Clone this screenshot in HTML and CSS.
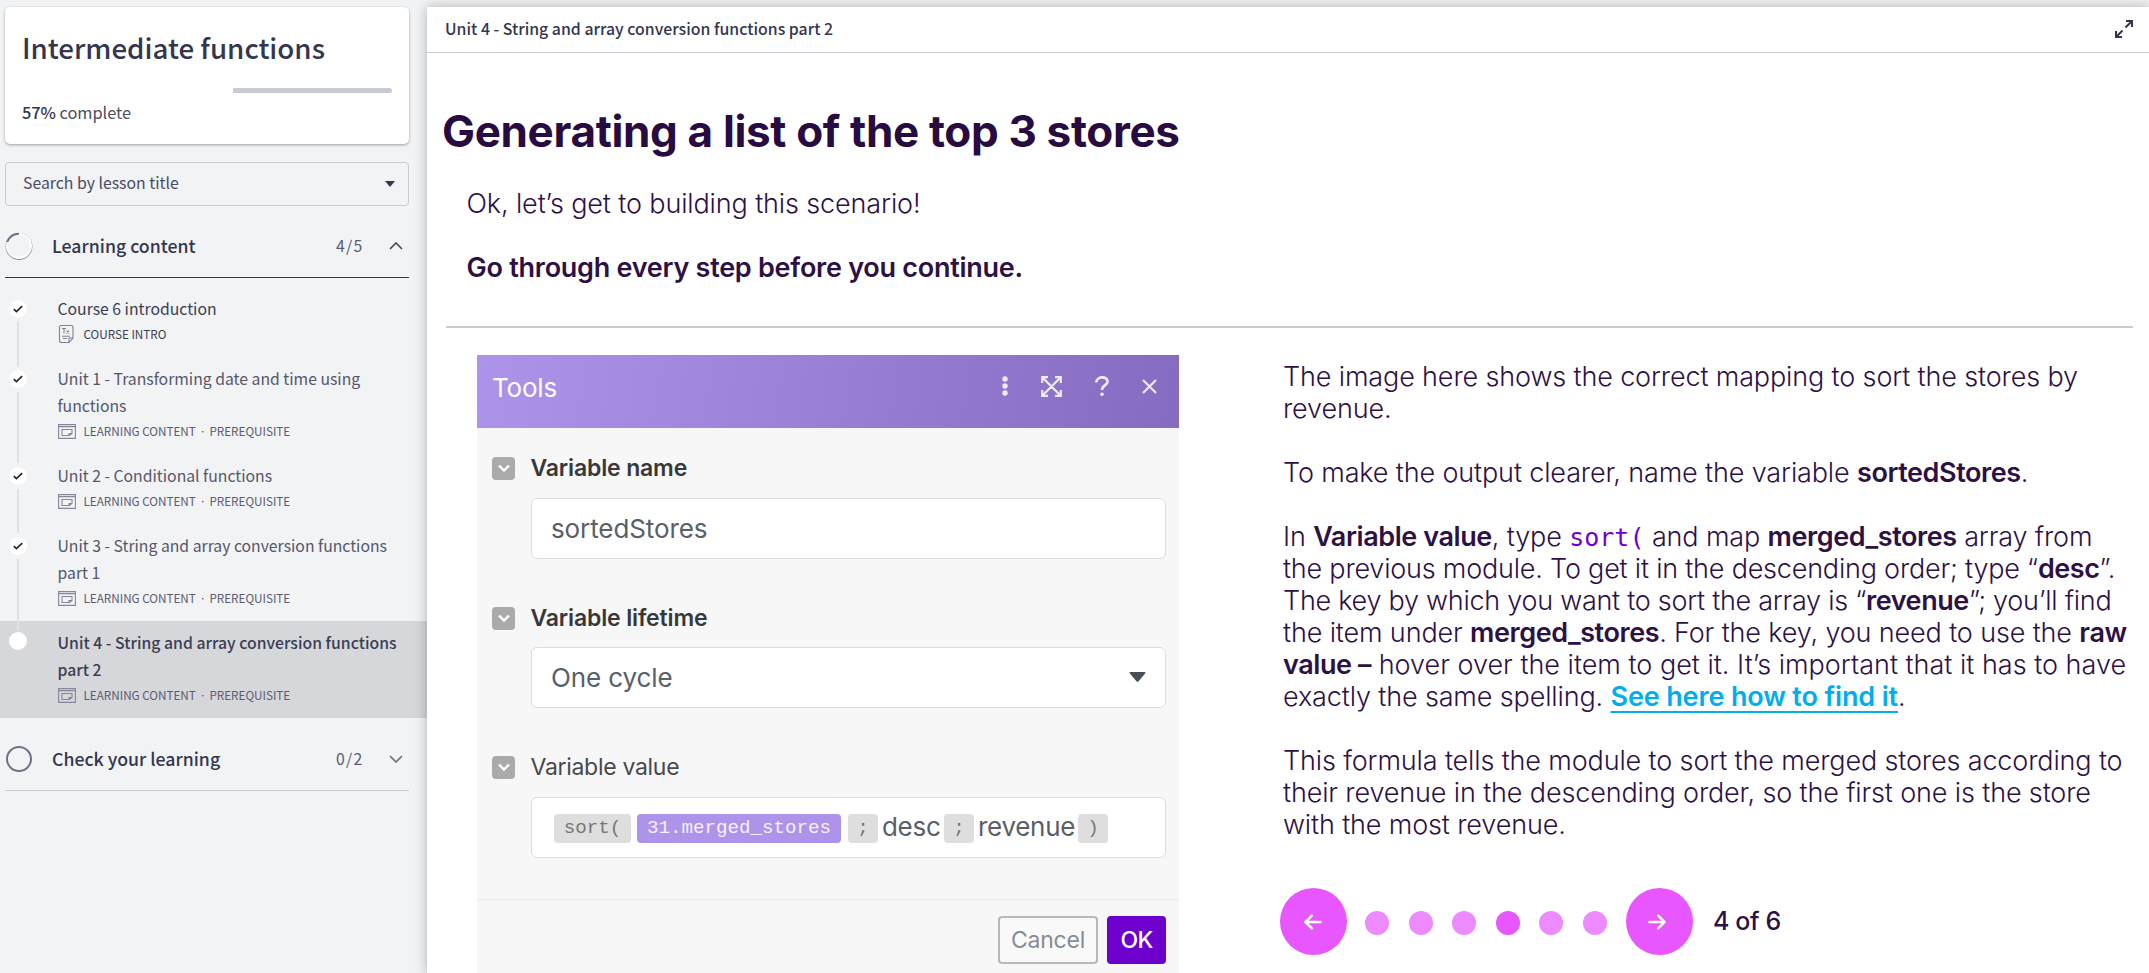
FILE: index.html
```html
<!DOCTYPE html>
<html lang="en">
<head>
<meta charset="utf-8">
<title>Intermediate functions</title>
<link rel="stylesheet" href="styles.css">
</head>
<body>
<div class="app">
  <aside class="sidebar">
    <section class="card">
      <h1 class="course-title">Intermediate functions</h1>
      <div class="progress"><div class="rest"></div></div>
      <p class="complete"><b>57%</b> complete</p>
    </section>
    <div class="search"><span>Search by lesson title</span>
      <svg width="10" height="6" viewBox="0 0 10 6"><path d="M0 0h10L5 6z" fill="#33364d"/></svg>
    </div>
    <div class="section open">
      <svg class="ring" width="28" height="28" viewBox="0 0 28 28"><circle cx="14" cy="14.500" r="12.700" fill="none" stroke="#8b8d9d" stroke-width="1.400"/><circle cx="14" cy="14" r="12" fill="none" stroke="#fff" stroke-width="2"/><path d="M2.200 10A12.300 12.300 0 0 1 14 1.700" fill="none" stroke="#6e7084" stroke-width="2"/></svg>
      <span class="name">Learning content</span><span class="count">4/5</span>
      <svg class="chev" width="14" height="8" viewBox="0 0 14 8"><path d="M1 7l6-6 6 6" fill="none" stroke="#4a4c60" stroke-width="1.7"/></svg>
    </div>
    <ul class="lessons">
      <li class="one"><i class="dot"><svg width="10" height="8" viewBox="0 0 10 8"><path d="M.8 4.2L3.4 6.6 9.2 1.2" fill="none" stroke="#222" stroke-width="1.6"/></svg></i><i class="rail"></i>
        <div class="title dark">Course 6 introduction</div>
        <div class="meta dark"><svg width="18" height="18" viewBox="0 0 18 18" fill="none" stroke="#7d8294"><path d="M1.500 2.500q0-2 2-2h9.500q2 0 2 2V13l-4 4.500H3.500q-2 0-2-2zM15 13h-4v4.500M4 3.500h4M6 3.500v5M8.500 5.500l2.500 3M11 5.500l-2.500 3M4 11.200h8M5 13.500h4" stroke-width="1.1"/></svg>COURSE INTRO</div></li>
      <li><i class="dot"><svg width="10" height="8" viewBox="0 0 10 8"><path d="M.8 4.2L3.4 6.6 9.2 1.2" fill="none" stroke="#222" stroke-width="1.6"/></svg></i><i class="rail"></i>
        <div class="title">Unit 1 - Transforming date and time using<br>functions</div>
        <div class="meta"><svg width="18" height="15" viewBox="0 0 18 15"><use href="#screen"/></svg><span>LEARNING CONTENT <span class="sep">·</span> PREREQUISITE</span></div></li>
      <li class="one"><i class="dot"><svg width="10" height="8" viewBox="0 0 10 8"><path d="M.8 4.2L3.4 6.6 9.2 1.2" fill="none" stroke="#222" stroke-width="1.6"/></svg></i><i class="rail"></i>
        <div class="title">Unit 2 - Conditional functions</div>
        <div class="meta"><svg width="18" height="15" viewBox="0 0 18 15"><use href="#screen"/></svg><span>LEARNING CONTENT <span class="sep">·</span> PREREQUISITE</span></div></li>
      <li><i class="dot"><svg width="10" height="8" viewBox="0 0 10 8"><path d="M.8 4.2L3.4 6.6 9.2 1.2" fill="none" stroke="#222" stroke-width="1.6"/></svg></i><i class="rail"></i>
        <div class="title">Unit 3 - String and array conversion functions<br>part 1</div>
        <div class="meta"><svg width="18" height="15" viewBox="0 0 18 15"><use href="#screen"/></svg><span>LEARNING CONTENT <span class="sep">·</span> PREREQUISITE</span></div></li>
      <li class="current"><i class="dot"></i>
        <div class="title">Unit 4 - String and array conversion functions<br>part 2</div>
        <div class="meta"><svg width="18" height="15" viewBox="0 0 18 15"><use href="#screen"/></svg><span>LEARNING CONTENT <span class="sep">·</span> PREREQUISITE</span></div></li>
    </ul>
    <div class="section closed">
      <svg class="ring" width="28" height="28" viewBox="0 0 28 28"><circle cx="14" cy="14" r="12" fill="none" stroke="#6e7084" stroke-width="2"/></svg>
      <span class="name">Check your learning</span><span class="count">0/2</span>
      <svg class="chev" width="14" height="8" viewBox="0 0 14 8"><path d="M1 1l6 6 6-6" fill="none" stroke="#6e7084" stroke-width="1.7"/></svg>
    </div>
  </aside>

  <main class="panel">
    <header class="topbar"><span>Unit 4 - String and array conversion functions part 2</span>
      <svg width="20" height="20" viewBox="0 0 20 20" fill="none" stroke="#33364d" stroke-width="2"><path d="M11.500 8.500L17.500 2.500M12 2h6v6M8.500 11.500L2.500 17.500M2 12v6h6"/></svg>
    </header>
    <h2 class="heading">Generating a list of the top 3 stores</h2>
    <p class="lead first">Ok, let’s get to building this scenario!</p>
    <p class="lead strong">Go through every step before you continue.</p>
    <hr class="rule">
    <div class="columns">
      <section class="tools">
        <header class="tools-head"><span>Tools</span>
          <div class="tools-icons">
            <svg width="6" height="20" viewBox="0 0 6 20" fill="#efeafa"><circle cx="3" cy="3" r="2.7"/><circle cx="3" cy="10" r="2.7"/><circle cx="3" cy="17" r="2.700"/></svg>
            <svg width="21" height="21" viewBox="0 0 21 21" fill="none" stroke="#efeafa" stroke-width="2.200"><path d="M2 2l17 17M19 2L2 19M1.200 7V1.200H7M14 1.200h5.800V7M19.800 14v5.800H14M7 19.800H1.200V14"/></svg>
            <svg width="14" height="20" viewBox="0 0 14 20" fill="none" stroke="#efeafa" stroke-width="2.600"><path d="M1.400 6.500C1.400-.2 12.600-.2 12.600 5.600 12.600 9.300 7 9 7 14"/><circle cx="7" cy="18.200" r="1.800" fill="#efeafa" stroke="none"/></svg>
            <svg width="15" height="15" viewBox="0 0 15 15" fill="none" stroke="#efeafa" stroke-width="2.100"><path d="M1 1l13 13M14 1L1 14"/></svg>
          </div>
        </header>
        <div class="field top"><i class="toggle"><svg width="14" height="9" viewBox="0 0 14 9"><path d="M2 1.500l5 5 5-5" fill="none" stroke="#fff" stroke-width="2.400"/></svg></i><label class="label">Variable name</label></div>
        <div class="input">sortedStores</div>
        <div class="field tight"><i class="toggle"><svg width="14" height="9" viewBox="0 0 14 9"><path d="M2 1.500l5 5 5-5" fill="none" stroke="#fff" stroke-width="2.400"/></svg></i><label class="label">Variable lifetime</label></div>
        <div class="input"><span>One cycle</span><svg width="17" height="10" viewBox="0 0 17 10"><path d="M1.500 0h14q1.500 0 .6 1.400L9.600 9.300q-1.100 1-2.200 0L.9 1.400Q0 0 1.500 0z" fill="#4a4f57"/></svg></div>
        <div class="field"><i class="toggle"><svg width="14" height="9" viewBox="0 0 14 9"><path d="M2 1.500l5 5 5-5" fill="none" stroke="#fff" stroke-width="2.400"/></svg></i><label class="label light">Variable value</label></div>
        <div class="input formula"><code class="chip wide">sort(</code><code class="chip var">31.merged_stores</code><code class="chip gap">;</code><span class="word w1">desc</span><code class="chip">;</code><span class="word w2">revenue</span><code class="chip">)</code></div>
        <footer class="tools-foot"><button class="btn cancel">Cancel</button><button class="btn ok">OK</button></footer>
      </section>
      <article class="text">
        <p>The image here shows the correct mapping to sort the stores by<br>revenue.</p>
        <p>To make the output clearer, name the variable <b>sortedStores</b>.</p>
        <p>In <b>Variable value</b>, type <code class="kw">sort(</code> and map <b>merged_stores</b> array from<br>
          <span class="tight">the previous module. To get it in the descending order; type “<b>desc</b>”.</span><br>
          <span class="tighter">The key by which you want to sort the array is “<b>revenue</b>”; you’ll find</span><br>
          the item under <b>merged_stores</b>. For the key, you need to use the <b>raw</b><br>
          <span class="loose"><b>value –</b> hover over the item to get it. It’s important that it has to have</span><br>
          exactly the same spelling. <a class="link">See here how to find it</a>.</p>
        <p>This formula tells the module to sort the merged stores according to<br>their revenue in the descending order, so the first one is the store<br>with the most revenue.</p>
        <nav class="pager">
          <span class="arrow"><svg width="18" height="16" viewBox="0 0 18 16" fill="none" stroke="#fff" stroke-width="2.600" stroke-linecap="round" stroke-linejoin="round"><path d="M16.500 8H2M7.800 1.700L1.500 8l6.300 6.300"/></svg></span>
          <div class="dots"><i></i><i></i><i></i><i class="on"></i><i></i><i></i></div>
          <span class="arrow next"><svg width="18" height="16" viewBox="0 0 18 16" fill="none" stroke="#fff" stroke-width="2.600" stroke-linecap="round" stroke-linejoin="round"><path d="M1.500 8H16M10.200 1.700L16.500 8l-6.300 6.300"/></svg></span>
          <span class="pos">4 of 6</span>
        </nav>
      </article>
    </div>
  </main>
</div>
<svg width="0" height="0" class="defs"><symbol id="screen" viewBox="0 0 18 15"><path d="M.6.600h16.800v13.800H.600zM.6 2.600h16.800M4 5.500h10v4l-2.500 2H4zM14 9.500h-3v2" fill="none" stroke="#85879a" stroke-width="1.100"/></symbol></svg>
</body>
</html>
```
FILE: styles.css
```css
* { box-sizing: border-box; }
body { margin: 0; background: #f1f3f5; color: #33364d; font-family: "Noto Sans CJK SC", "Noto Sans", sans-serif; overflow: hidden; }
h1, h2, p, ul { margin: 0; padding: 0; }
i { font-style: normal; }
.app { display: flex; height: 973px; }
.defs { position: absolute; }

/* Sidebar */
.sidebar { width: 427px; flex: none; padding-top: 7px; }
.card { margin: 0 18px 0 5px; height: 137px; padding: 18px 17px 0; background: #fff; border-radius: 5px; box-shadow: 0 1px 3px rgba(0,0,0,.35); }
.course-title { font-size: 27.700px; line-height: 44px; font-weight: 500; }
.progress { margin-top: 19px; height: 5px; display: flex; justify-content: flex-end; }
.rest { width: 159px; background: #c8cad6; border-radius: 0 3px 3px 0; }
.complete { font-size: 16.400px; line-height: 26px; margin-top: 6px; color: #4a4c60; letter-spacing: -.05px; }
.complete b { font-weight: 500; color: #33364d; }
.search { margin: 18px 18px 0 5px; height: 44px; border: 1px solid #c8cad6; border-radius: 4px; display: flex; align-items: center; justify-content: space-between; padding: 0 13px 0 17px; font-size: 15.800px; color: #4a4c60; }
.search span { margin-top: -3px; }
.section { margin: 0 18px 0 5px; display: flex; align-items: center; }
.section.open { height: 72px; border-bottom: 1px solid #33364d; padding-top: 9px; }
.section.closed { height: 73px; border-bottom: 1px solid #c8cad6; padding-top: 9px; }
.name { font-size: 17.700px; font-weight: 500; margin: -2px 0 0 19px; flex: 1; }
.count { font-size: 15.800px; width: 53px; letter-spacing: 1.300px; color: #5a5c70; margin-top: -1px; }
.chev { margin-right: 6px; }
.lessons { list-style: none; padding-top: 9px; }
.lessons li { position: relative; height: 97px; padding: 8px 0 0 57.500px; }
.lessons li.one { height: 70px; }
.title { font-size: 15.750px; line-height: 27px; color: #55576b; white-space: nowrap; }
.meta { display: flex; align-items: center; font-size: 11.700px; line-height: 24px; color: #5a5c70; white-space: nowrap; }
.title.dark, .meta.dark { color: #3b3e52; }
.meta svg { margin-right: 8px; }
.sep { font-family: Inter, sans-serif; margin: 0 2.500px; }
.dot { position: absolute; left: 9px; top: 13px; width: 18px; height: 18px; border-radius: 50%; background: #fff; display: flex; align-items: center; justify-content: center; }
.rail { position: absolute; left: 17px; top: 35px; bottom: -9px; width: 2px; background: #dfe1e4; z-index: 1; }
.current { background: #d6d7db; }
.current .dot { top: 11px; }
.current .title { font-weight: 500; color: #3b3e52; letter-spacing: .02px; }

/* Lesson panel */
.panel { flex: 1; margin-top: 7px; background: #fff; box-shadow: 0 0 12px rgba(0,0,0,.28); color: #2d1145; font-family: Inter, "Noto Sans", sans-serif; position: relative; z-index: 2; }
.topbar { height: 46px; border-bottom: 1px solid #c8cad6; padding: 0 15px 2px 18px; display: flex; align-items: center; justify-content: space-between; font: 500 15.850px "Noto Sans CJK SC", sans-serif; color: #33364d; }
.heading { margin: 48px 0 0 15px; font-size: 44px; line-height: 60px; font-weight: 700; letter-spacing: -.34px; color: #280b40; white-space: nowrap; }
.lead { margin-left: 39.500px; font-size: 27px; line-height: 32px; font-weight: 300; letter-spacing: -.13px; }
.lead.first { padding-top: 27px; }
.lead.strong { padding-top: 32px; font-weight: 600; letter-spacing: -.26px; }
.rule { border: 0; height: 2px; background: #cfc9cb; margin: 42px 16px 0 19px; }
.columns { display: flex; padding: 27px 0 0 50px; align-items: flex-start; }

/* Module dialog */
.tools { width: 702px; height: 618px; background: #f7f7f7; flex: none; }
.tools-head { height: 73px; padding: 17px 22px 0 15px; display: flex; justify-content: space-between; font-size: 26px; line-height: 32px; color: #fff; background: linear-gradient(100deg, #ad93ea, #866cc0); letter-spacing: -.2px; }
.tools-icons { display: flex; gap: 33px; align-items: center; height: 28px; }
.field { display: flex; align-items: center; height: 23px; margin: 48px 0 18px 15px; }
.field.top { margin-top: 29px; }
.field.tight { margin-bottom: 17px; }
.toggle { width: 23px; height: 23px; border-radius: 4px; background: #aaa; display: flex; align-items: center; justify-content: center; margin-right: 15.500px; }
.label { font-size: 23px; line-height: 23px; font-weight: 600; color: #38383a; letter-spacing: -.15px; }
.label.light { font-weight: 400; color: #48494c; letter-spacing: -.3px; }
.input { margin: 0 13px 0 54px; height: 61px; background: #fff; border: 1px solid #ddd; border-radius: 6px; font-size: 26px; color: #596067; display: flex; align-items: center; justify-content: space-between; padding: 0 19px 1px 19px; letter-spacing: -.1px; }
.input.formula { justify-content: flex-start; padding: 2px 0 0 22px; }
.chip { width: 30px; height: 29px; border-radius: 4px; background: #dedede; color: #75777a; font: 19.200px/28px "Liberation Mono", monospace; letter-spacing: 0; text-align: center; flex: none; }
.chip.wide { width: 77px; }
.chip.var { width: 204px; margin-left: 6px; background: #ad93ea; color: #f6f2ff; }
.chip.gap { margin-left: 7px; }
.word { padding-left: 4px; flex: none; letter-spacing: -.3px; line-height: 32px; margin-top: -3px; }
.w1 { width: 66px; }
.w2 { width: 104px; }
.tools-foot { margin-top: 41px; border-top: 1px solid #ececec; padding: 16px 13px 0 0; display: flex; justify-content: flex-end; gap: 9px; }
.btn { height: 48px; border-radius: 4px; border: 0; padding: 0; font: 400 23px Inter, sans-serif; letter-spacing: -.2px; }
.cancel { width: 100px; border: 2px solid #b3b9be; background: #f9f9f9; color: #858d94; }
.ok { width: 59px; background: #6d00cc; color: #fff; font-weight: 500; letter-spacing: -.6px; }

/* Instructions */
.text { font-size: 27px; line-height: 32px; font-weight: 300; white-space: nowrap; margin: 6px 0 0 104px; letter-spacing: -.14px; }
.text b, .link { font-weight: 600; }
.text b { letter-spacing: -.42px; }
.text p { margin-bottom: 32px; }
.tight { letter-spacing: -.21px; }
.tighter { letter-spacing: -.27px; }
.loose { letter-spacing: 0; }
.kw { font: 25px/20px "DejaVu Sans Mono", monospace; color: #6d00cc; letter-spacing: 0; }
.link { color: #00adef; text-decoration: underline; text-decoration-thickness: 2px; text-underline-offset: 5px; text-decoration-skip-ink: none; }
.pager { display: flex; align-items: center; margin: 47px 0 0 -3px; }
.arrow { width: 67px; height: 67px; padding-right: 2px; border-radius: 50%; background: #e756ff; display: flex; align-items: center; justify-content: center; }
.arrow.next { padding-right: 5px; }
.dots { width: 242px; margin: 3px 19px 0 18px; display: flex; justify-content: space-between; }
.dots i { width: 24px; height: 24px; border-radius: 50%; background: #ee8aff; }
.dots .on { background: #e756ff; }
.pos { font-size: 25px; font-weight: 500; margin: -2px 0 0 20px; letter-spacing: -.35px; }
```
